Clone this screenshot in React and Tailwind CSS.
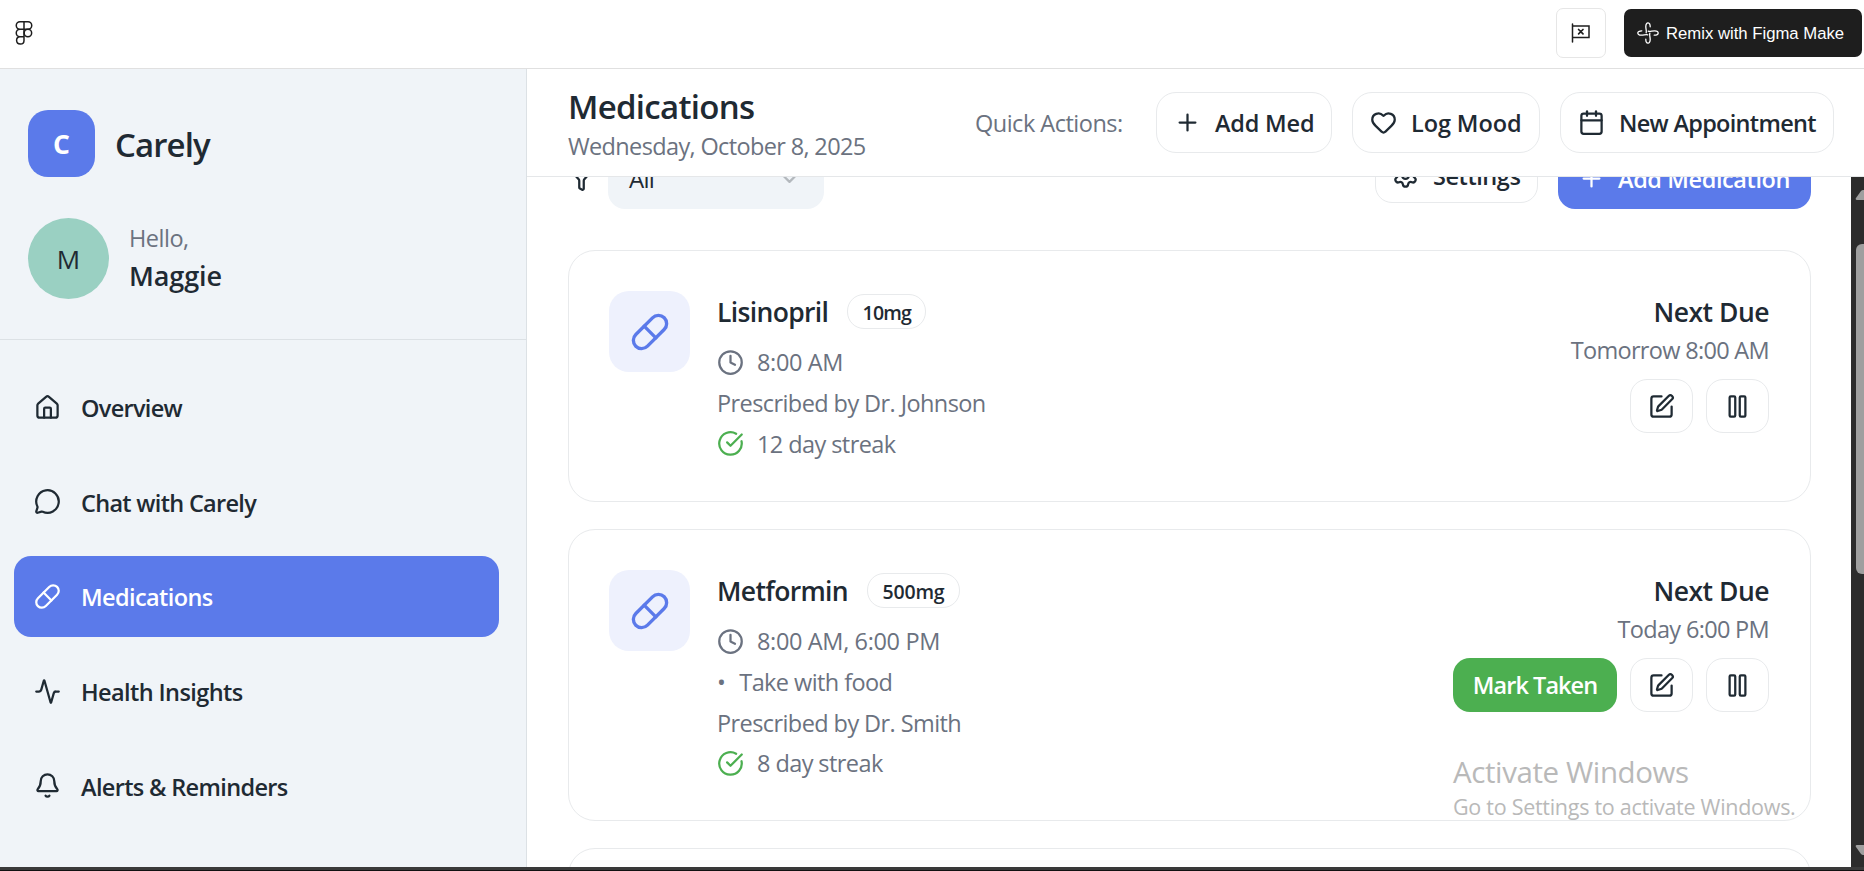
import { House, MessageCircle, Pill, Activity, Bell, Plus, Heart, Calendar, Clock, CircleCheckBig, SquarePen, Pause, Funnel, ChevronDown, Settings } from "lucide-react";

const nav = [
  { label: "Overview", icon: House, track: "tracking-[-0.7px]" },
  { label: "Chat with Carely", icon: MessageCircle, track: "tracking-[-0.7px]" },
  { label: "Medications", icon: Pill, active: true, track: "tracking-[-0.6px]" },
  { label: "Health Insights", icon: Activity, track: "tracking-[-0.6px]" },
  { label: "Alerts & Reminders", icon: Bell, track: "tracking-[-0.65px]" },
];

function FigmaLogo() {
  return (
    <svg width="18" height="26" viewBox="0 0 18 26" fill="none" stroke="#1e1e1e" strokeWidth="1.500">
      <path d="M9 1.700H5a3.700 3.700 0 0 0 0 7.500h4zM9 1.700h4a3.700 3.700 0 0 1 0 7.500H9zM9 9.200H5a3.700 3.700 0 0 0 0 7.500h4zM9 16.700H5a3.700 3.700 0 1 0 4 3.700z" />
      <circle cx="12.900" cy="12.950" r="3.750" />
    </svg>
  );
}

function FlagIcon() {
  return (
    <svg width="20" height="20" viewBox="0 0 20 20" fill="none" stroke="#1e1e1e" strokeWidth="1.500" strokeLinecap="round">
      <path d="M1.500 1v18M1.500 3h16.500v11.500h-16.500" />
      <path d="M7.600 6.500l4.400 4.400M12 6.500l-4.400 4.400" strokeWidth="1.700" />
    </svg>
  );
}

function RemixIcon() {
  return (
    <svg width="22" height="22" viewBox="0 0 22 22" fill="none" stroke="#fff" strokeWidth="1.300" strokeLinecap="round">
      {[0, 90, 180, 270].map((angle) => (
        <path key={angle} transform={`rotate(${angle} 11 11)`} d="M13.200 4.800C13.200 -.3 9 -.5 8.800 4.200c-.1 2.600 1 4.600 .4 6.600" />
      ))}
    </svg>
  );
}

function TopBar() {
  return (
    <div className="flex h-[69px] items-center border-b border-[#e0e0e0] bg-white pl-[15px] pr-[2px] pb-0.5">
      <FigmaLogo />
      <div className="ml-auto flex size-[50px] items-center justify-center rounded-[7px] border border-[#e6e6e6]"><FlagIcon /></div>
      <div className="ml-[18px] flex h-12 w-[238px] items-center rounded-[7px] bg-[#1e1e1e] pl-[13px] font-['Liberation_Sans',sans-serif] text-[16.7px] text-white">
        <RemixIcon />
        <span className="ml-[7px] mt-px whitespace-nowrap">Remix with Figma Make</span>
      </div>
    </div>
  );
}

function Sidebar() {
  return (
    <div className="flex w-[527px] shrink-0 flex-col border-r border-[#dce1e5] bg-[#f0f4f8]">
      <div className="flex h-[271px] flex-col border-b border-[#dce1e5] pl-7 pt-[41px]">
        <div className="flex items-center">
          <div className="flex size-[67px] items-center justify-center rounded-[20px] bg-[#5b7aea] pt-0.5 text-[26.5px] font-bold text-white">C</div>
          <div className="ml-[20px] mt-[3px] text-[33px] font-semibold leading-10 tracking-[-0.9px]">Carely</div>
        </div>
        <div className="mt-[41px] flex items-center">
          <div className="flex size-[81px] items-center justify-center rounded-full bg-[#9ad0c2] pt-0.5 text-[26px]">M</div>
          <div className="-mt-px ml-[20px]">
            <div className="text-[23.5px] leading-[36px] tracking-[-0.5px] text-[#6b7280]">Hello,</div>
            <div className="text-[27px] font-semibold leading-[40px] tracking-[-0.1px]">Maggie</div>
          </div>
        </div>
      </div>
      <div className="mt-[27px] flex flex-col gap-[14px] pl-[14px] pr-[27px]">
        {nav.map(({ label, icon: Icon, active, track }) => (
          <div key={label} className={`flex h-[80.6px] items-center rounded-[17px] pl-5 text-[23.5px] font-semibold ${active ? "bg-[#5b7aea] text-white" : ""}`}>
            <Icon size={27} strokeWidth={2} />
            <span className={`ml-[20px] mt-[3px] ${track}`}>{label}</span>
          </div>
        ))}
      </div>
    </div>
  );
}

function QuickButton({ icon: Icon, label, box }) {
  return (
    <div className={`flex h-[61px] items-center rounded-[20px] border border-[#e8eaec] bg-white pl-[17px] text-[23.5px] font-semibold ${box}`}>
      <Icon size={27} strokeWidth={2} />
      <span className="ml-[14px] mt-0.5 whitespace-nowrap">{label}</span>
    </div>
  );
}

function Header() {
  return (
    <div className="flex h-[108px] shrink-0 items-center border-b border-[#e5e7e9] bg-white pl-[41px]">
      <div className="w-[407px] pt-1">
        <div className="text-[33px] font-semibold leading-[42px] tracking-[-0.7px]">Medications</div>
        <div className="text-[23.5px] leading-[36px] tracking-[-0.64px] text-[#6b7280]">Wednesday, October 8, 2025</div>
      </div>
      <div className="w-[181px] pt-0.5 text-[23.5px] tracking-[-0.5px] text-[#6b7280]">Quick Actions:</div>
      <div className="flex gap-[20px]">
        <QuickButton icon={Plus} label="Add Med" box="w-[176px] tracking-[-0.2px]" />
        <QuickButton icon={Heart} label="Log Mood" box="w-[188px] tracking-[-0.1px]" />
        <QuickButton icon={Calendar} label="New Appointment" box="w-[274px] tracking-[-0.7px]" />
      </div>
    </div>
  );
}

function Toolbar() {
  return (
    <div className="flex h-[67px] shrink-0 items-center">
      <Funnel size={27} strokeWidth={2} />
      <div className="ml-[13px] flex h-[61px] w-[216px] items-center rounded-[17px] bg-[#f0f4f8] pl-[21px] pr-[21px] text-[24px] tracking-[-0.7px]">
        All
        <ChevronDown size={27} className="ml-auto text-[#b3b8bd]" />
      </div>
      <div className="-mt-[6px] ml-auto flex h-[54px] w-[163px] items-center rounded-[17px] border border-[#e8eaec] pl-4 text-[23.5px] font-semibold tracking-[-0.45px]">
        <Settings size={27} />
        <span className="ml-[14px] mt-[3px]">Settings</span>
      </div>
      <div className="ml-5 flex h-[61px] w-[253px] items-center rounded-[17px] bg-[#5b7aea] pl-5 text-[23.5px] font-semibold tracking-[-0.4px] text-white">
        <Plus size={27} />
        <span className="ml-[13px] mt-[3px]">Add Medication</span>
      </div>
    </div>
  );
}

function IconButton({ icon: Icon }) {
  return (
    <div className="flex h-[54px] w-[63px] items-center justify-center rounded-[17px] border border-[#e8eaec]"><Icon size={27} /></div>
  );
}

function MedCard({ name, dose, doseBox, times, note, doctor, streak, due, take, height }) {
  return (
    <div className={`flex shrink-0 rounded-[27px] border border-[#e8eaec] pl-10 pr-[41px] pt-10 ${height}`}>
      <div className="flex size-[81px] shrink-0 items-center justify-center rounded-[20px] bg-[#eef1fd] text-[#5b7aea]"><Pill size={40} /></div>
      <div className="ml-[27px] text-[23.5px] tracking-[-0.58px] text-[#6b7280]">
        <div className="flex h-[40px] items-center text-[#1f2a33]">
          <span className="mt-[3px] text-[26.5px] font-semibold tracking-[-0.65px]">{name}</span>
          <span className={`ml-[19px] flex h-[35px] items-center justify-center rounded-[17px] border border-[#e8eaec] pt-[3px] text-[19.5px] font-semibold ${doseBox}`}>{dose}</span>
        </div>
        <div className="mt-[11px] flex h-[40.6px] items-center gap-[13px] tracking-[-0.35px]"><Clock size={27} /><span className="mt-px">{times}</span></div>
        {note && <div className="flex h-[40.6px] items-center gap-[14px] pt-0.5"><span>•</span>{note}</div>}
        <div className="flex h-[40.6px] items-center pt-0.5">{doctor}</div>
        <div className="flex h-[40.6px] items-center gap-[13px]"><CircleCheckBig size={27} className="text-[#4caf50]" /><span className="mt-0.5">{streak}</span></div>
      </div>
      <div className="ml-auto flex flex-col items-end">
        <div className="pt-px text-[26.5px] font-semibold leading-[40px] tracking-[-0.5px]">Next Due</div>
        <div className="text-[23.5px] leading-[36px] tracking-[-0.68px] text-[#6b7280]">{due}</div>
        <div className="mt-[11px] flex gap-[13px]">
          {take && <div className="flex h-[54px] w-[164px] items-center justify-center rounded-[17px] bg-[#4caf50] pt-0.5 text-[23.5px] font-semibold tracking-[-0.95px] text-white">Mark Taken</div>}
          <IconButton icon={SquarePen} />
          <IconButton icon={Pause} />
        </div>
      </div>
    </div>
  );
}

function Scrollbar() {
  return (
    <div className="relative flex w-[13px] shrink-0 flex-col items-end overflow-hidden bg-[#2c2c2c] pt-[67px]">
      <div className="h-[330px] w-2 rounded-l-[6px] bg-[#9f9f9f]" />
      <svg className="absolute left-[4px] top-[12px]" width="18" height="12"><path d="M2 11Q0 11 1 9L6 2Q7 1 8 1h3l7 10z" fill="#9f9f9f" /></svg>
      <svg className="absolute bottom-[11px] left-[4px]" width="18" height="12"><path d="M2 1Q0 1 1 3L6 10Q7 11 8 11h3l7-10z" fill="#9f9f9f" /></svg>
    </div>
  );
}

export default function App() {
  return (
    <div className="relative flex h-[871px] w-[1864px] flex-col overflow-hidden bg-white font-['Open_Sans',sans-serif] text-[#1f2a33]">
      <TopBar />
      <div className="flex h-[798px]">
        <Sidebar />
        <div className="flex grow flex-col">
          <Header />
          <div className="flex h-[690px] overflow-hidden">
            <div className="flex h-[690px] grow flex-col justify-start overflow-hidden pl-[41px] pr-10">
              <div className="-mt-[32px] flex flex-col">
                <Toolbar />
                <div className="mt-[38px] flex flex-col gap-[27px]">
                  <MedCard height="h-[252px]" name="Lisinopril" dose="10mg" doseBox="w-[79px] tracking-[-0.8px]" times="8:00 AM" doctor="Prescribed by Dr. Johnson" streak="12 day streak" due="Tomorrow 8:00 AM" />
                  <MedCard height="h-[292px]" name="Metformin" dose="500mg" doseBox="w-[93px] tracking-[-0.2px]" times="8:00 AM, 6:00 PM" note="Take with food" doctor="Prescribed by Dr. Smith" streak="8 day streak" due="Today 6:00 PM" take />
                  <div className="h-[252px] rounded-[27px] border border-[#e8eaec]" />
                </div>
              </div>
            </div>
            <Scrollbar />
          </div>
        </div>
      </div>
      <div className="h-[4px] border-b border-[#111] bg-[#3a3a3a]" />
      <div className="absolute left-[1453px] top-[751px] whitespace-nowrap text-[#b9b9b9]">
        <div className="text-[29.5px] leading-[42px] tracking-[-0.4px]">Activate Windows</div>
        <div className="text-[21.5px] leading-[27px] tracking-[-0.28px]">Go to Settings to activate Windows.</div>
      </div>
    </div>
  );
}
